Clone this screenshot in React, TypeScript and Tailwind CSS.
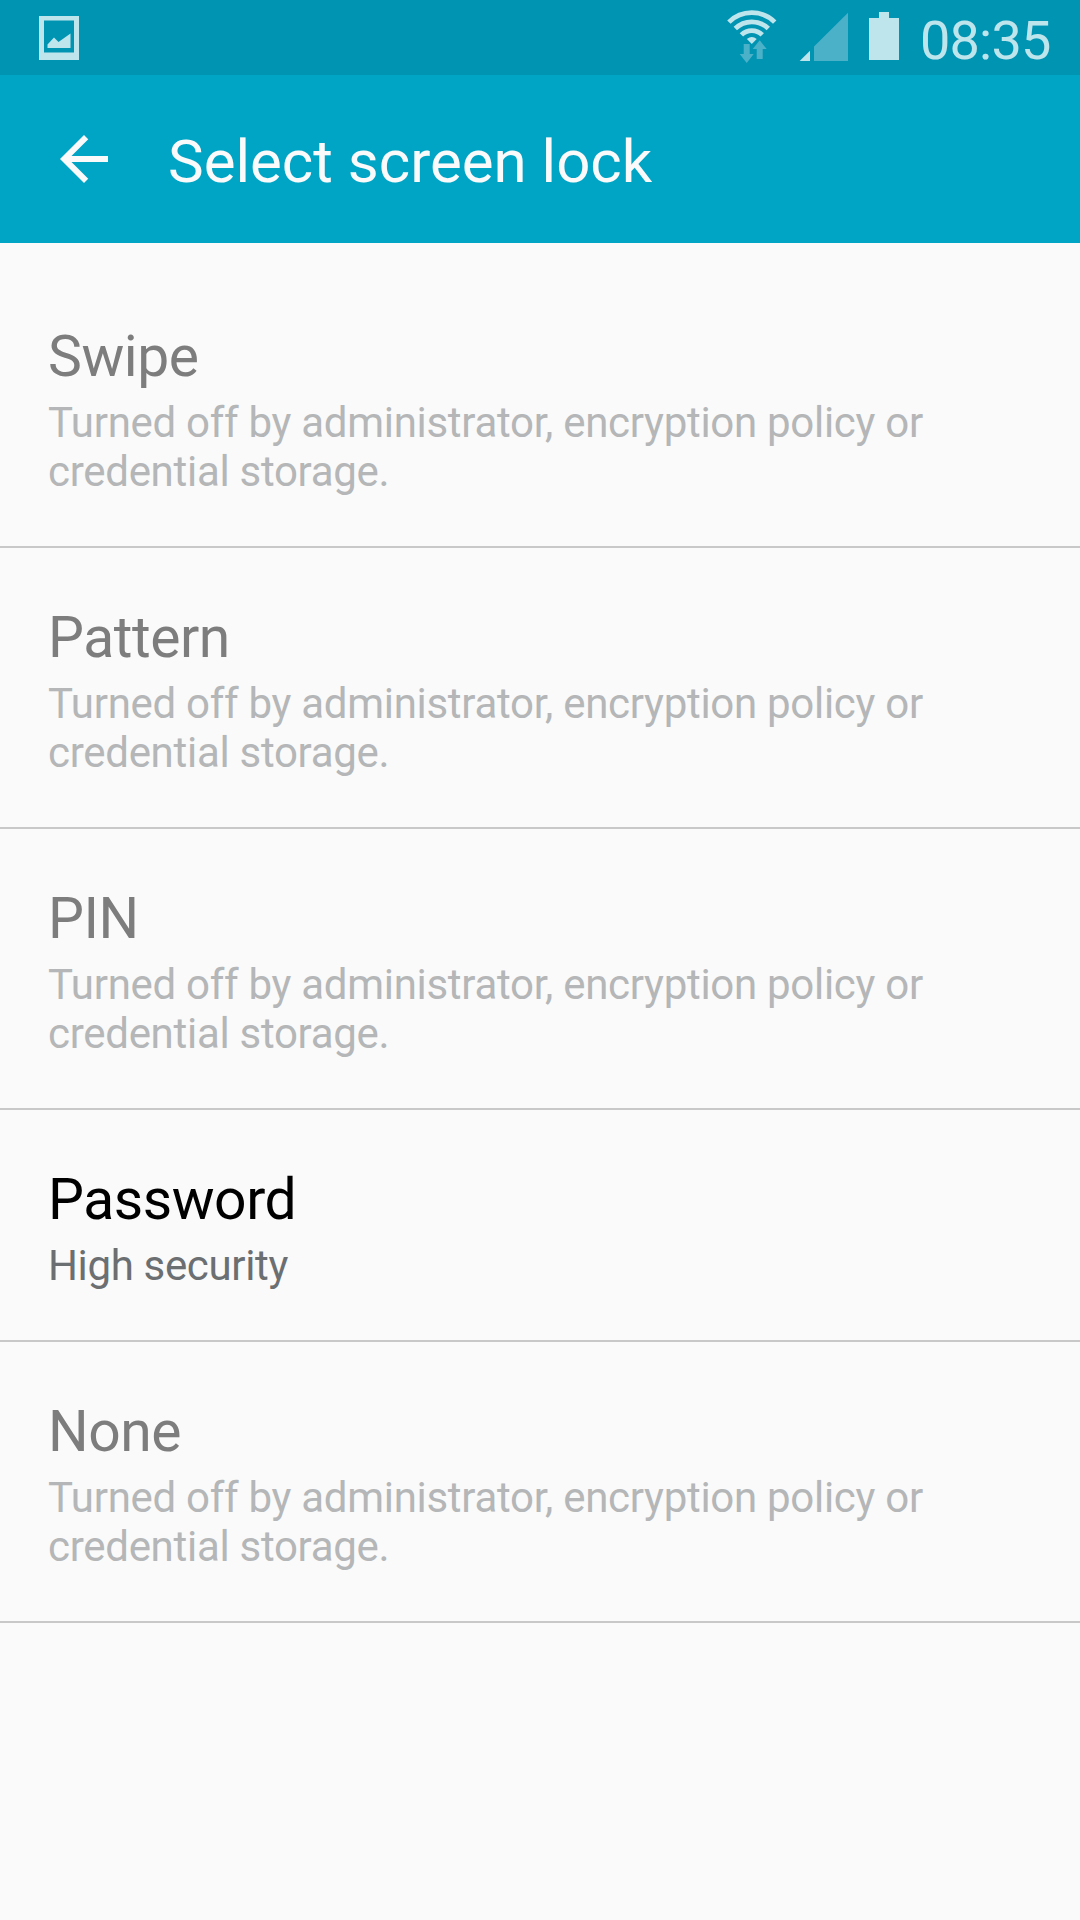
const off = 'Turned off by administrator, encryption policy or credential storage.';
const options = [
  { title: 'Swipe', note: off, enabled: false },
  { title: 'Pattern', note: off, enabled: false },
  { title: 'PIN', note: off, enabled: false },
  { title: 'Password', note: 'High security', enabled: true },
  { title: 'None', note: off, enabled: false },
];

function PictureIcon() {
  return (
    <svg width="40" height="44" viewBox="0 0 40 44" className="mt-4 ml-[39px] shrink-0" fill="currentColor">
      <path fillRule="evenodd" d="M0 0H40V44H0ZM5 4.5V36.5H35V4.5Z" />
      <path d="M8.5 32V28.5L15 21.5L19.5 26L31.5 17.5V32Z" />
    </svg>
  );
}

function WifiIcon() {
  return (
    <svg width="50" height="54" viewBox="0 0 50 54" className="mt-[10px] shrink-0" fill="none">
      <g stroke="currentColor" strokeWidth="4.8">
        <path d="M1.9 12.1A32.6 32.6 0 0 1 47.7 12.1" />
        <path d="M8.3 18.5A23.7 23.7 0 0 1 41.3 18.5" />
        <path d="M14.4 24.9A14.8 14.8 0 0 1 35.2 24.9" />
      </g>
      <path d="M24.8 34L19.9 29Q24.8 25 29.7 29Z" fill="currentColor" />
      <g fill="#4bb1c8">
        <path d="M16.7 34H22.7V44H26.7L19.7 53L12.7 44H16.7Z" />
        <path d="M32.7 30.3L39.7 39H35.7V49H29.7V39H25.7Z" />
      </g>
    </svg>
  );
}

function SignalIcon() {
  return (
    <svg width="49" height="49" viewBox="0 0 49 49" className="mt-3 ml-[22px] shrink-0">
      <path d="M0.7 49L11 38.7V49Z" fill="currentColor" />
      <path d="M15 34.5L49 0.7V49H15Z" fill="#4bb1c8" />
    </svg>
  );
}

function BatteryIcon() {
  return (
    <svg width="30" height="48" viewBox="0 0 30 48" className="mt-3 ml-[21px] shrink-0" fill="currentColor">
      <path d="M10 0H20V6H30V48H0V6H10Z" />
    </svg>
  );
}

function StatusBar() {
  return (
    <div className="flex h-[75px] shrink-0 items-start justify-between bg-[#0094b3] text-[#bfe5ec]">
      <PictureIcon />
      <div className="flex w-[353px] items-start">
        <WifiIcon />
        <SignalIcon />
        <BatteryIcon />
        <span className="ml-[21px] pt-[3px] text-[54px] leading-[75px] tracking-[-0.8px]">08:35</span>
      </div>
    </div>
  );
}

export default function App() {
  return (
    <div className="flex h-[1920px] w-[1080px] flex-col overflow-hidden bg-[#fafafa] font-['Roboto',sans-serif]">
      <StatusBar />
      <header className="flex h-[168px] shrink-0 items-center bg-[#00a5c6] text-[#fafafa]">
        <svg width="72" height="72" viewBox="0 0 24 24" className="ml-12 shrink-0" fill="currentColor">
          <path d="M20 11H7.83l5.59-5.59L12 4l-8 8 8 8 1.41-1.41L7.83 13H20v-2z" />
        </svg>
        <h1 className="ml-12 pt-[5px] text-[60px] font-normal">Select screen lock</h1>
      </header>
      <ul className="pt-6">
        {options.map((o) => (
          <li key={o.title} className={o.enabled ? 'h-[232px] border-b-2 border-[#c8c8c8] px-12 pt-[55px]' : 'h-[281px] border-b-2 border-[#c8c8c8] px-12 pt-[55px]'}>
            <h2 className={o.enabled ? 'text-[57px] leading-[70px] tracking-[-0.45px] text-black' : 'text-[57px] leading-[70px] tracking-[-0.45px] text-[#7d7d7d]'}>{o.title}</h2>
            <p className={o.enabled ? 'mt-[6px] w-[900px] text-[42px] leading-[49px] tracking-[-0.35px] text-[#6b6f71]' : 'mt-[6px] w-[900px] text-[42px] leading-[49px] tracking-[-0.29px] text-[#b4b6b7]'}>{o.note}</p>
          </li>
        ))}
      </ul>
    </div>
  );
}
